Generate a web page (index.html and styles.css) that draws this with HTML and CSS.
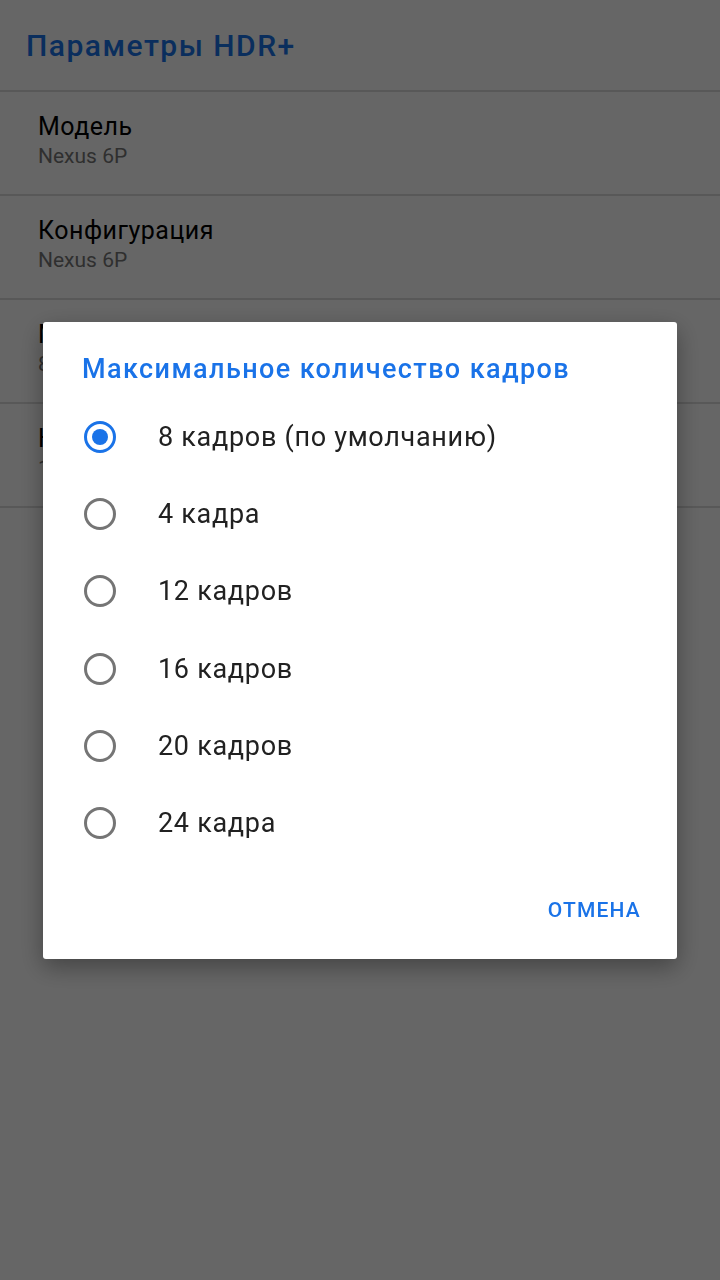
FILE: index.html
```html
<!DOCTYPE html>
<html lang="ru">
<head>
    <meta charset="UTF-8">
    <meta name="viewport" content="width=device-width, initial-scale=1.0">
    <title>Параметры HDR+</title>
    <link rel="stylesheet" href="styles.css">
</head>
<body>
    <header class="toolbar">
        <h1>Параметры HDR+</h1>
    </header>

    <div class="prefs">
        <div class="pref">
            <div class="pref-title">Модель</div>
            <div class="pref-summary">Nexus 6P</div>
        </div>
        <div class="pref">
            <div class="pref-title">Конфигурация</div>
            <div class="pref-summary">Nexus 6P</div>
        </div>
        <div class="pref">
            <div class="pref-title">Макс. кадров</div>
            <div class="pref-summary">8 кадров</div>
        </div>
        <div class="pref">
            <div class="pref-title">Настройки</div>
            <div class="pref-summary">1</div>
        </div>
    </div>

    <div class="scrim">
        <div class="dialog">
            <h2 class="dialog-title">Максимальное количество кадров</h2>
            <ul class="options">
                <li class="option checked"><span class="radio"></span>8 кадров (по умолчанию)</li>
                <li class="option"><span class="radio"></span>4 кадра</li>
                <li class="option"><span class="radio"></span>12 кадров</li>
                <li class="option"><span class="radio"></span>16 кадров</li>
                <li class="option"><span class="radio"></span>20 кадров</li>
                <li class="option"><span class="radio"></span>24 кадра</li>
            </ul>
            <div class="actions">
                <button class="text-button">Отмена</button>
            </div>
        </div>
    </div>
</body>
</html>
```

FILE: styles.css
```css
body {
    font-family: Roboto, "Noto Sans", sans-serif;
    margin: 0;
    background-color: #fff;
    min-height: 1280px;
}

.toolbar {
    height: 90px;
    display: flex;
    align-items: center;
    padding-left: 26px;
    border-bottom: 2px solid #ddd;
}

.toolbar h1 {
    margin: 0;
    font-size: 30px;
    font-weight: 500;
    letter-spacing: 1.5px;
    color: #1a73e8;
}

.pref {
    height: 102px;
    padding-left: 38px;
    border-bottom: 2px solid #ddd;
    display: flex;
    flex-direction: column;
    justify-content: center;
}

.pref-title {
    font-size: 25px;
    letter-spacing: 0.5px;
    color: #000;
    margin-top: -6px;
}

.pref-summary {
    font-size: 21px;
    color: #777;
    margin-top: 3px;
}

.scrim {
    position: fixed;
    inset: 0;
    background-color: rgba(0, 0, 0, 0.6);
    display: flex;
    align-items: center;
    justify-content: center;
}

.dialog {
    width: 634px;
    height: 637px;
    background-color: #fff;
    border-radius: 3px;
    box-shadow: 0 8px 24px rgba(0, 0, 0, 0.35);
    box-sizing: border-box;
    padding: 30px 36px 0 39px;
    display: flex;
    flex-direction: column;
}

.dialog-title {
    margin: 0;
    font-size: 27px;
    font-weight: 500;
    letter-spacing: 1.4px;
    color: #1a73e8;
    line-height: 34px;
}

.options {
    list-style: none;
    margin: 13px 0 0 0;
    padding: 0;
}

.option {
    height: 77.2px;
    display: flex;
    align-items: center;
    font-size: 27px;
    letter-spacing: 0.7px;
    color: #212121;
}

.radio {
    width: 26px;
    height: 26px;
    border: 3px solid #757575;
    border-radius: 50%;
    box-sizing: content-box;
    margin-left: 2px;
    margin-right: 42px;
    display: flex;
    align-items: center;
    justify-content: center;
}

.checked .radio {
    border-color: #1a73e8;
}

.checked .radio::after {
    content: "";
    width: 16px;
    height: 16px;
    border-radius: 50%;
    background-color: #1a73e8;
}

.actions {
    display: flex;
    justify-content: flex-end;
    margin-top: 36px;
}

.text-button {
    font-family: inherit;
    font-size: 21px;
    font-weight: 500;
    letter-spacing: 1.2px;
    text-transform: uppercase;
    color: #1a73e8;
    background: none;
    border: none;
    padding: 0;
    cursor: pointer;
}
```
